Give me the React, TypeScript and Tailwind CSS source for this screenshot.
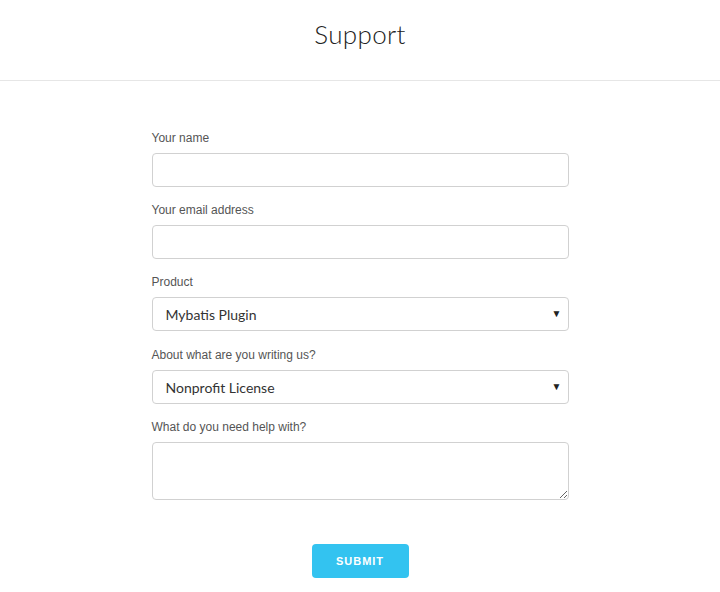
import { useState } from 'react';

const fields = [
  { label: 'Your name', type: 'text' },
  { label: 'Your email address', type: 'email' },
];

function Select({ label, options, last }: { label: string; options: string[]; last?: boolean }) {
  const [value, setValue] = useState(options[0]);
  return (
    <div className={last ? 'mb-[15px]' : 'mb-[16px]'}>
      <label className="block text-[12px] leading-[16px] text-[#555] mb-[7px]">{label}</label>
      <div className="relative">
        <select
          value={value}
          onChange={e => setValue(e.target.value)}
          className="block w-full h-[34px] appearance-none rounded-[4px] border border-[#d1d1d1] bg-white pl-[13px] pr-8 text-[14px] text-[#333] outline-none"
          style={{ fontFamily: 'Lato, "Open Sans", sans-serif' }}
        >
          {options.map(o => (
            <option key={o}>{o}</option>
          ))}
        </select>
        <span className="pointer-events-none absolute right-[7px] top-[9px] text-[10px] leading-[16px] text-[#222]">▼</span>
      </div>
    </div>
  );
}

export default function App() {
  return (
    <div className="min-h-[592px] bg-white" style={{ fontFamily: '"Liberation Sans", Arial, sans-serif' }}>
      <header className="h-[81px] border-b border-[#e6e6e6] flex justify-center pt-[17px]">
        <h1 className="text-[26px] leading-[34px] font-light text-[#222] tracking-[0.3px]" style={{ fontFamily: 'Lato, "Open Sans", sans-serif' }}>
          Support
        </h1>
      </header>

      <form className="w-[417px] mx-auto pt-[49px]" onSubmit={e => e.preventDefault()}>
        {fields.map(f => (
          <div key={f.label} className="mb-[15px]">
            <label className="block text-[12px] leading-[16px] text-[#555] mb-[7px]">{f.label}</label>
            <input
              type={f.type}
              className="block w-full h-[34px] rounded-[4px] border border-[#d1d1d1] bg-white px-[12px] text-[14px] outline-none"
            />
          </div>
        ))}

        <Select label="Product" options={['Mybatis Plugin']} />
        <Select label="About what are you writing us?" options={['Nonprofit License']} last />

        <div>
          <label className="block text-[12px] leading-[16px] text-[#555] mb-[7px]">What do you need help with?</label>
          <textarea className="block w-full h-[58px] rounded-[4px] border border-[#d1d1d1] bg-white px-[12px] py-[6px] text-[14px] outline-none" />
        </div>

        <div className="flex justify-center pt-[44px]">
          <button
            type="submit"
            className="w-[97px] h-[34px] rounded-[4px] bg-[#33c3f0] text-white text-[11px] font-bold tracking-[1px] uppercase"
          >
            Submit
          </button>
        </div>
      </form>
    </div>
  );
}
